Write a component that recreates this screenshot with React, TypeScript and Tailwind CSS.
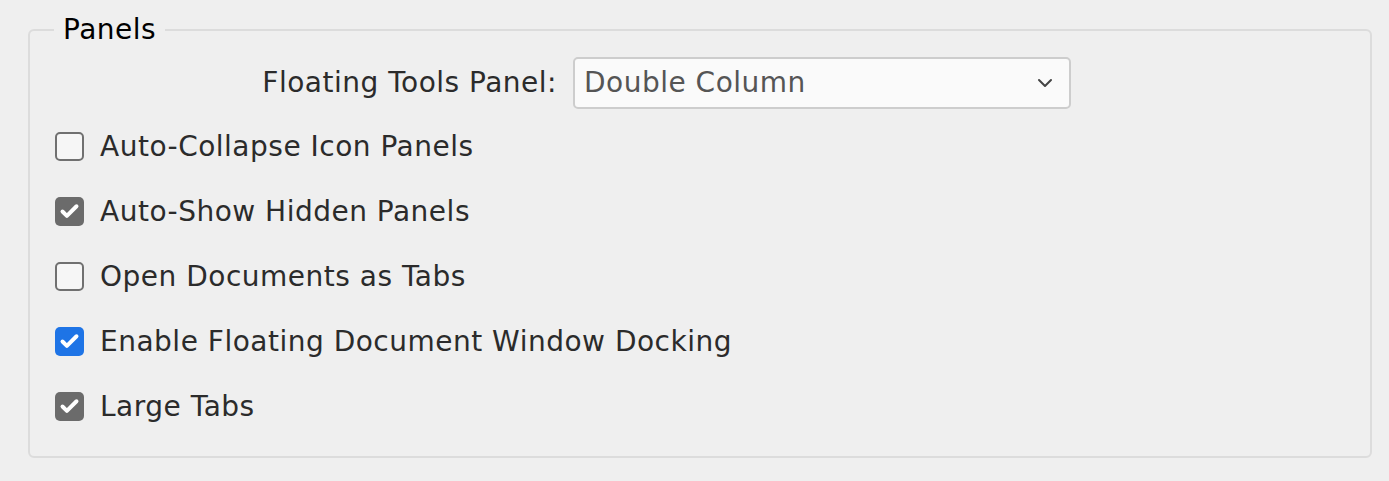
import { Check, ChevronDown } from "lucide-react";

const OPTIONS = [
  { label: "Auto-Collapse Icon Panels", checked: false },
  { label: "Auto-Show Hidden Panels", checked: true },
  { label: "Open Documents as Tabs", checked: false },
  { label: "Enable Floating Document Window Docking", checked: true, focused: true },
  { label: "Large Tabs", checked: true },
];

function Checkbox({ checked, focused }: { checked: boolean; focused?: boolean }) {
  if (!checked) {
    return <span className="h-[29px] w-[29px] shrink-0 rounded-[5px] border-2 border-[#707070] bg-[#f6f6f6]" />;
  }
  return (
    <span
      className={`flex h-[29px] w-[29px] shrink-0 items-center justify-center rounded-[5px] ${
        focused ? "bg-[#1e74e6]" : "bg-[#6b6b6b]"
      }`}
    >
      <Check className="h-[21px] w-[21px] text-white" strokeWidth={4.5} />
    </span>
  );
}

export default function App() {
  return (
    <div className="min-h-[481px] w-[1389px] bg-[#efefef] px-[28px] pt-[3px] font-['DejaVu_Sans',sans-serif] tracking-[0.5px] text-[#2b2b2b]">
      <fieldset className="h-[455px] w-[1344px] rounded-[6px] border-2 border-[#dcdcdc]">
        <legend className="ml-[24px] px-[9px] text-[28px] leading-[54px] text-black">Panels</legend>
        <div className="flex items-center">
          <div className="flex w-[527px] justify-end">
            <span className="text-[28px]">Floating Tools Panel:</span>
          </div>
          <div className="ml-[16px] flex h-[52px] w-[498px] items-center justify-between rounded-[5px] border-2 border-[#cdcdcd] bg-[#fafafa] pl-[9px] pr-[12px]">
            <span className="text-[28px] text-[#555]">Double Column</span>
            <ChevronDown className="h-[24px] w-[24px] text-[#444]" strokeWidth={2} />
          </div>
        </div>
        <div className="mt-[23px] flex flex-col gap-[36px] pl-[25px]">
          {OPTIONS.map((o) => (
            <label key={o.label} className="flex h-[29px] items-center gap-[16px] text-[28px]">
              <Checkbox checked={o.checked} focused={o.focused} />
              <span>{o.label}</span>
            </label>
          ))}
        </div>
      </fieldset>
    </div>
  );
}
